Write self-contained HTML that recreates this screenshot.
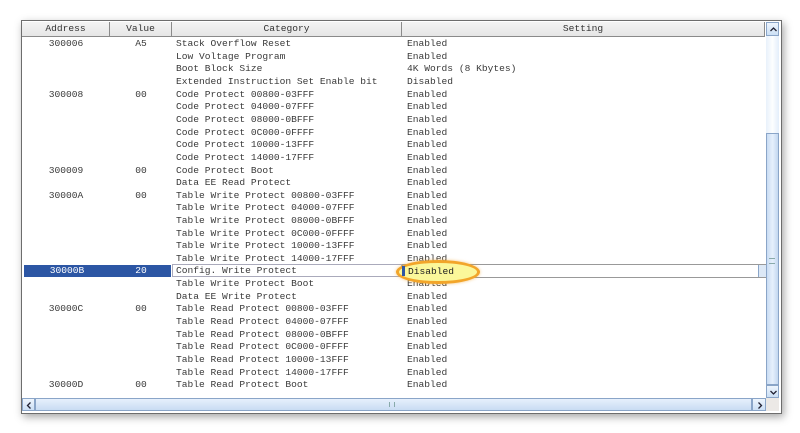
<!DOCTYPE html>
<html><head><style>
body{margin:0;width:800px;height:433px;background:#fff;position:relative;overflow:hidden;font-family:"Liberation Mono",monospace;font-size:9.6px;color:#3a3a3a}
.frame{position:absolute;left:21px;top:20px;width:759px;height:392px;border:1px solid #6d6d6d;box-shadow:2px 3px 8px rgba(0,0,0,.35);background:#fff}
.hd{position:absolute;top:22px;height:14px;line-height:14px;background:linear-gradient(#f4f4f4,#e6e6e6);border-right:1px solid #8a8a8a;border-bottom:1px solid #8a8a8a;text-align:center;color:#333}
.r{position:absolute;height:12.63px;line-height:12.63px;white-space:pre}
.a{left:22px;width:88px;text-align:center}
.v{left:110px;width:62px;text-align:center}
.c{left:176px}
.s{left:407px}
.sb{position:absolute;background:linear-gradient(90deg,#e8f1fb,#fdfeff,#e3eefb)}
.btn{position:absolute;background:linear-gradient(#eef5fd,#cbdff5);border:1px solid #8aa5c8;box-sizing:border-box}
.btn svg{position:absolute;left:0;top:0}
</style></head><body>
<div class="frame"></div>
<div class="hd" style="left:22px;width:87px">Address</div>
<div class="hd" style="left:110px;width:61px">Value</div>
<div class="hd" style="left:172px;width:229px">Category</div>
<div class="hd" style="left:402px;width:362px">Setting</div>
<div id="rows"></div>
<!-- selected row -->
<div style="position:absolute;left:24px;top:265px;width:147px;height:12px;background:#2c56a4"></div>
<div style="position:absolute;left:172px;top:264px;width:230px;height:13px;border:1px solid #aab;box-sizing:border-box;background:#fff"></div>
<div style="position:absolute;left:402px;top:264px;width:364px;height:14px;border:1px solid #999;box-sizing:border-box;background:#fff"></div>
<div style="position:absolute;left:758px;top:265px;width:8px;height:12px;background:#dce8f6;border-left:1px solid #8aa5c8"></div>
<div style="position:absolute;left:396px;top:260px;width:84px;height:24px;border-radius:50%;background:#fbf79a;border:3px solid #f2a52a;box-sizing:border-box;box-shadow:0 0 3px rgba(240,160,40,.6)"></div>
<div style="position:absolute;left:402px;top:266px;width:3px;height:10px;background:#2c56a4"></div>
<div class="r" style="left:24px;width:86px;top:265px;text-align:center;color:#fff">30000B</div>
<div class="r" style="left:110px;width:62px;top:265px;text-align:center;color:#fff">20</div>
<div class="r c" style="top:265px">Config. Write Protect</div>
<div class="r" style="left:408px;top:266px;color:#222">Disabled</div>
<!-- vertical scrollbar -->
<div class="sb" style="left:766px;top:22px;width:13px;height:376px"></div>
<div class="btn" style="left:766px;top:22px;width:13px;height:14px"><svg width="13" height="14"><path d="M3.5 8 L6.5 5 L9.5 8" fill="none" stroke="#223" stroke-width="1.3"/></svg></div>
<div class="btn" style="left:766px;top:133px;width:13px;height:252px;background:linear-gradient(90deg,#c9dcf3,#e6f0fc,#c3d7f0)"></div>
<div style="position:absolute;left:769px;top:258px;width:6px;height:4px;border-top:1px solid #8aa;border-bottom:1px solid #8aa"></div>
<div class="btn" style="left:766px;top:385px;width:13px;height:13px"><svg width="13" height="13"><path d="M3.5 5 L6.5 8 L9.5 5" fill="none" stroke="#223" stroke-width="1.3"/></svg></div>
<!-- horizontal scrollbar -->
<div class="sb" style="left:22px;top:398px;width:744px;height:13px;background:linear-gradient(#e8f1fb,#fdfeff)"></div>
<div class="btn" style="left:22px;top:398px;width:13px;height:13px"><svg width="13" height="13"><path d="M7.5 3.5 L4.5 6.5 L7.5 9.5" fill="none" stroke="#223" stroke-width="1.3"/></svg></div>
<div class="btn" style="left:35px;top:398px;width:717px;height:13px;background:linear-gradient(#e6f0fc,#c9dcf3)"></div>
<div style="position:absolute;left:389px;top:402px;width:4px;height:5px;border-left:1px solid #8aa;border-right:1px solid #8aa"></div>
<div class="btn" style="left:752px;top:398px;width:14px;height:13px"><svg width="13" height="13"><path d="M5.5 3.5 L8.5 6.5 L5.5 9.5" fill="none" stroke="#223" stroke-width="1.3"/></svg></div>
<div style="position:absolute;left:766px;top:398px;width:13px;height:13px;background:#ece9e6"></div>
<script>
var d=[["300006","A5","Stack Overflow Reset","Enabled"],["","","Low Voltage Program","Enabled"],["","","Boot Block Size","4K Words (8 Kbytes)"],["","","Extended Instruction Set Enable bit","Disabled"],
["300008","00","Code Protect 00800-03FFF","Enabled"],["","","Code Protect 04000-07FFF","Enabled"],["","","Code Protect 08000-0BFFF","Enabled"],["","","Code Protect 0C000-0FFFF","Enabled"],["","","Code Protect 10000-13FFF","Enabled"],["","","Code Protect 14000-17FFF","Enabled"],
["300009","00","Code Protect Boot","Enabled"],["","","Data EE Read Protect","Enabled"],
["30000A","00","Table Write Protect 00800-03FFF","Enabled"],["","","Table Write Protect 04000-07FFF","Enabled"],["","","Table Write Protect 08000-0BFFF","Enabled"],["","","Table Write Protect 0C000-0FFFF","Enabled"],["","","Table Write Protect 10000-13FFF","Enabled"],["","","Table Write Protect 14000-17FFF","Enabled"],
null,["","","Table Write Protect Boot","Enabled"],["","","Data EE Write Protect","Enabled"],
["30000C","00","Table Read Protect 00800-03FFF","Enabled"],["","","Table Read Protect 04000-07FFF","Enabled"],["","","Table Read Protect 08000-0BFFF","Enabled"],["","","Table Read Protect 0C000-0FFFF","Enabled"],["","","Table Read Protect 10000-13FFF","Enabled"],["","","Table Read Protect 14000-17FFF","Enabled"],
["30000D","00","Table Read Protect Boot","Enabled"]];
var h="";d.forEach(function(r,i){if(!r)return;var t=(38.2+12.63*i).toFixed(2);
h+='<div class="r a" style="top:'+t+'px">'+r[0]+'</div><div class="r v" style="top:'+t+'px">'+r[1]+'</div><div class="r c" style="top:'+t+'px">'+r[2]+'</div><div class="r s" style="top:'+t+'px">'+r[3]+'</div>';});
document.getElementById("rows").innerHTML=h;
</script>
</body></html>
